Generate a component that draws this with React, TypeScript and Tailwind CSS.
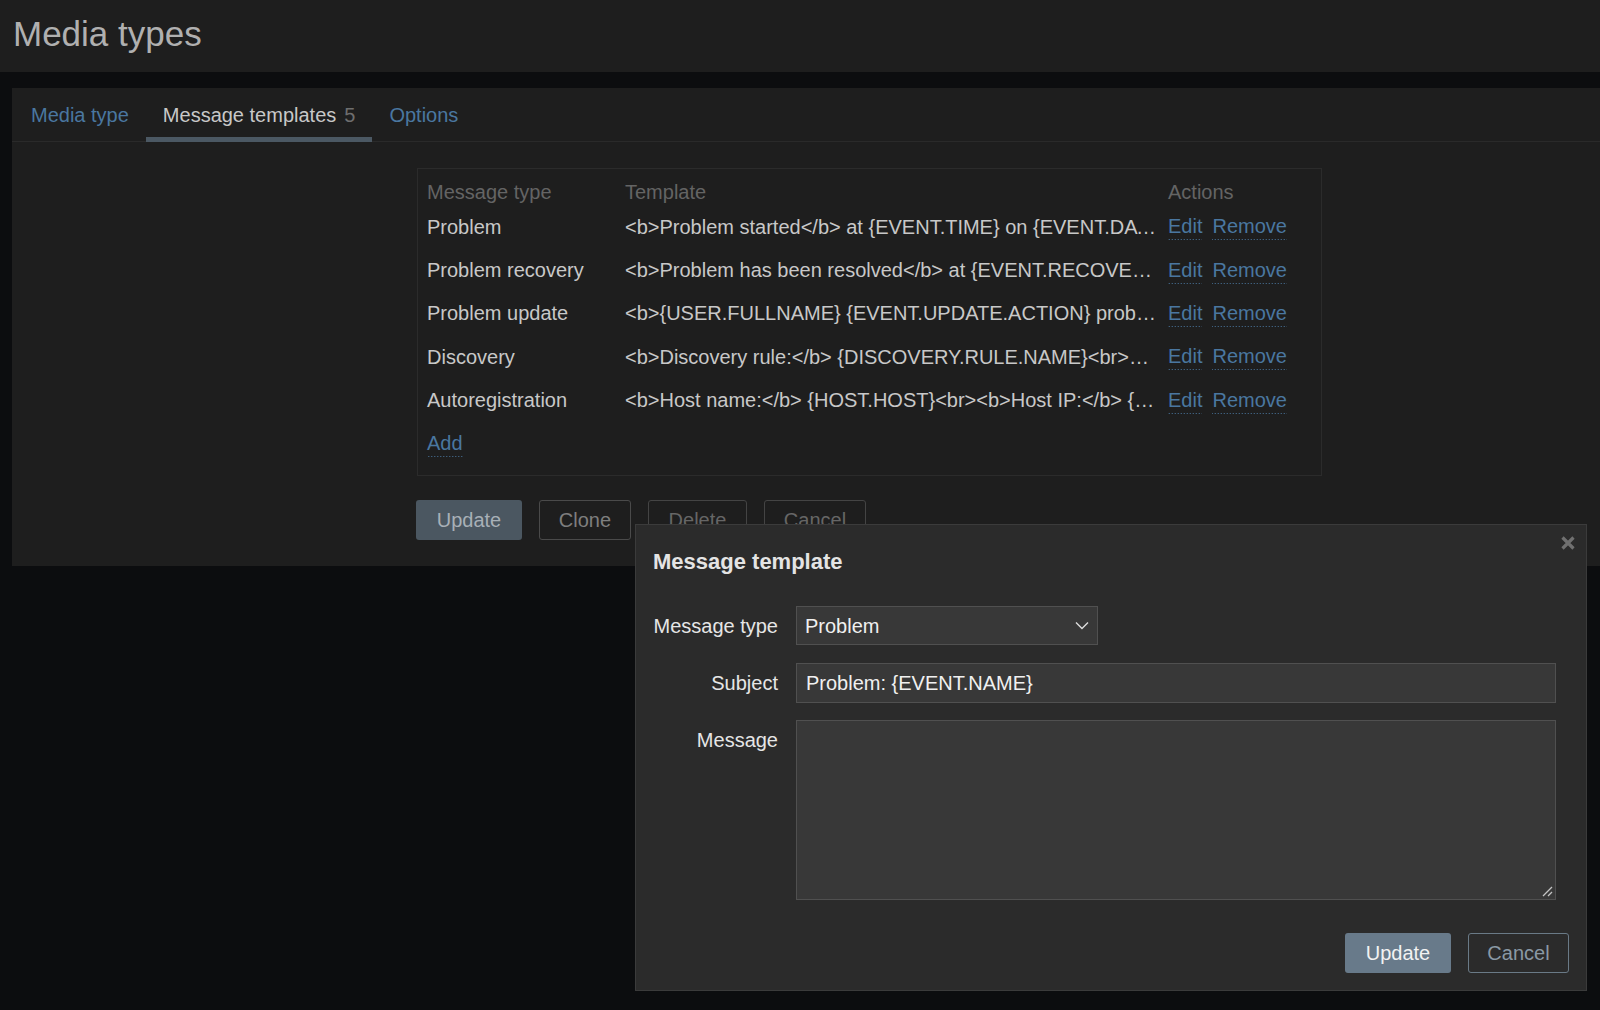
import React from "react";

const rows = [
  {
    type: "Problem",
    template:
      "<b>Problem started</b> at {EVENT.TIME} on {EVENT.DATE}<br><b>Problem name:</b> {EVENT.NAME}",
  },
  {
    type: "Problem recovery",
    template:
      "<b>Problem has been resolved</b> at {EVENT.RECOVERY.TIME} on {EVENT.RECOVERY.DATE}",
  },
  {
    type: "Problem update",
    template:
      "<b>{USER.FULLNAME} {EVENT.UPDATE.ACTION} problem</b> at {EVENT.UPDATE.DATE}",
  },
  {
    type: "Discovery",
    template:
      "<b>Discovery rule:</b> {DISCOVERY.RULE.NAME}<br><br><b>Device IP:</b> {DISCOVERY.DEVICE.IPADDRESS}",
  },
  {
    type: "Autoregistration",
    template:
      "<b>Host name:</b> {HOST.HOST}<br><b>Host IP:</b> {HOST.IP}<br><b>Agent port:</b> {HOST.PORT}",
  },
];

// dotted underline drawn as a repeating 1px dot / 2px gap, like the reference
function LinkText({ children }: { children: React.ReactNode }) {
  return (
    <span className="inline-block py-[2px] leading-[23px] text-[#4a77a0] bg-[linear-gradient(to_right,#4a77a0_33%,transparent_33%)] bg-[length:3px_1px] bg-repeat-x bg-bottom">
      {children}
    </span>
  );
}

function MessageTemplateDialog() {
  return (
    <div className="absolute left-[635px] top-[524px] w-[952px] h-[467px] bg-[#2b2b2b] border border-[#3b3b3b] pl-[17px] pr-[17px] pt-[24px]">
      <button className="absolute right-[10px] top-[11px] text-[#707070]">
        <svg width="16" height="14" viewBox="0 0 16 14">
          <path
            d="M2.5 1.5 L13.5 12.5 M13.5 1.5 L2.5 12.5"
            stroke="currentColor"
            strokeWidth="3.2"
          />
        </svg>
      </button>

      <h2 className="text-[22px] leading-[26px] font-bold text-[#e4e4e4]">
        Message template
      </h2>

      <div className="mt-[31px] flex flex-col gap-[18px]">
        <div className="flex items-center gap-[18px]">
          <label className="w-[125px] text-right text-[20px] text-[#e6e6e6]">
            Message type
          </label>
          <div className="w-[302px] h-[39px] bg-[#383838] border border-[#505050] flex items-center justify-between pl-[8px] pr-[8px] text-[20px] text-[#f0f0f0]">
            <span>Problem</span>
            <svg width="14" height="9" viewBox="0 0 14 9">
              <polyline
                points="1,1.5 7,7.5 13,1.5"
                fill="none"
                stroke="#dcdcdc"
                strokeWidth="1.4"
              />
            </svg>
          </div>
        </div>

        <div className="flex items-center gap-[18px]">
          <label className="w-[125px] text-right text-[20px] text-[#e6e6e6]">
            Subject
          </label>
          <div className="w-[760px] h-[40px] bg-[#383838] border border-[#505050] flex items-center pl-[9px] text-[20px] text-[#f0f0f0]">
            Problem: {"{EVENT.NAME}"}
          </div>
        </div>

        <div className="flex items-start gap-[18px] -mt-px">
          <label className="w-[125px] text-right text-[20px] leading-[40px] text-[#e6e6e6]">
            Message
          </label>
          <div className="relative w-[760px] h-[180px] bg-[#383838] border border-[#505050]">
            <svg
              className="absolute right-[2px] bottom-[2px]"
              width="12"
              height="12"
              viewBox="0 0 12 12"
            >
              <path d="M11 2 L2 11 M11 7 L7 11" stroke="#c4c4c4" strokeWidth="1.3" />
            </svg>
          </div>
        </div>
      </div>

      <div className="mt-[33px] flex justify-end gap-[17px]">
        <button className="w-[106px] h-[40px] rounded-[3px] bg-[#687a8a] text-[20px] text-[#f2f2f2]">
          Update
        </button>
        <button className="w-[101px] h-[40px] rounded-[3px] border border-[#6a7a87] text-[20px] text-[#8a99a5]">
          Cancel
        </button>
      </div>
    </div>
  );
}

export default function App() {
  return (
    <div className="relative w-[1600px] h-[1010px] overflow-hidden bg-[#0c0d0f] font-['Liberation_Sans',Arial,sans-serif]">
      <header className="h-[72px] bg-[#1e1e1e] pl-[13px] pt-[14px]">
        <h1 className="text-[35px] leading-[40px] text-[#b0b0b0]">Media types</h1>
      </header>

      <main className="pt-[16px] pl-[12px]">
        <section className="h-[478px] bg-[#1e1e1e]">
          <nav className="flex h-[54px] border-b border-[#2a2a2a] pl-[2px] text-[20px]">
            <a className="flex items-center px-[17px] text-[#4a77a0]">Media type</a>
            <a className="flex items-center px-[17px] h-[54px] text-[#c8c8c8] shadow-[inset_0_-5px_0_#4b5863]">
              Message templates
              <span className="ml-[8px] text-[#6e6e6e]">5</span>
            </a>
            <a className="flex items-center px-[17px] text-[#4a77a0]">Options</a>
          </nav>

          <div className="ml-[405px] mt-[26px] w-[905px] border border-[#2b2b2b] pt-[9px] pb-[10px] pl-[9px] text-[20px]">
            <div className="flex h-[27px] items-center text-[#646464]">
              <div className="w-[198px]">Message type</div>
              <div className="w-[543px]">Template</div>
              <div>Actions</div>
            </div>
            {rows.map((r) => (
              <div key={r.type} className="flex h-[43.4px] items-center text-[#c8c8c8]">
                <div className="w-[198px]">{r.type}</div>
                <div className="w-[543px] pr-[9px]">
                  <div className="truncate">{r.template}</div>
                </div>
                <div className="flex gap-[10px]">
                  <LinkText>Edit</LinkText>
                  <LinkText>Remove</LinkText>
                </div>
              </div>
            ))}
            <div className="flex h-[43.4px] items-center">
              <LinkText>Add</LinkText>
            </div>
          </div>

          <div className="ml-[404px] mt-[24px] flex gap-[17px] text-[20px]">
            <button className="w-[106px] h-[40px] rounded-[3px] bg-[#4b5761] text-[#a8b0b7]">
              Update
            </button>
            <button className="w-[92px] h-[40px] rounded-[3px] border border-[#4a4a4a] text-[#7e7e7e]">
              Clone
            </button>
            <button className="w-[99px] h-[40px] rounded-[3px] border border-[#444444] text-[#666666]">
              Delete
            </button>
            <button className="w-[102px] h-[40px] rounded-[3px] border border-[#444444] text-[#666666]">
              Cancel
            </button>
          </div>
        </section>
      </main>

      <MessageTemplateDialog />
    </div>
  );
}
